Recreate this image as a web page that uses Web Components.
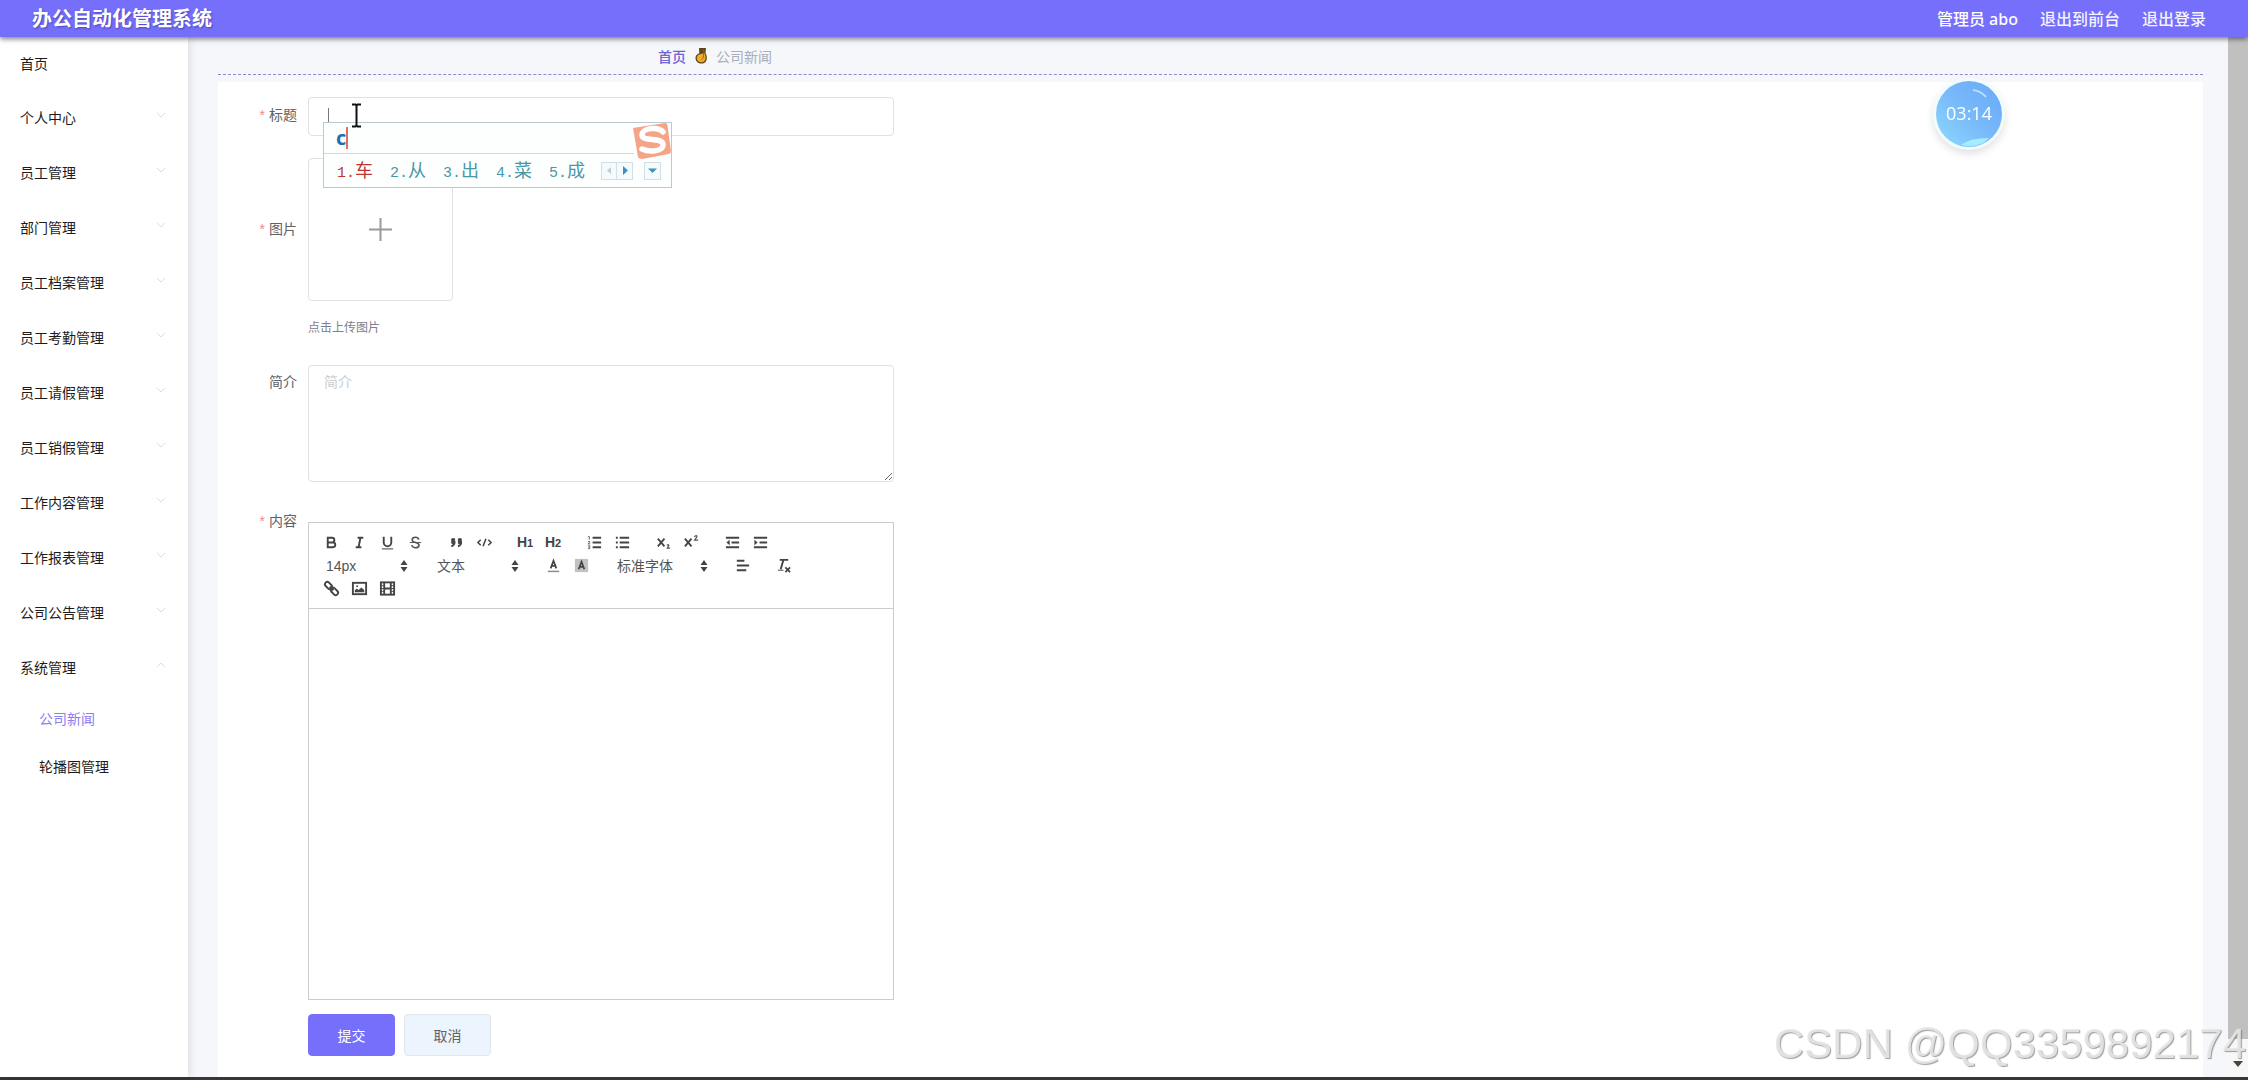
<!DOCTYPE html>
<html lang="zh-CN">
<head>
<meta charset="utf-8">
<title>办公自动化管理系统</title>
<style>
  html, body { margin: 0; height: 100%; }
  body { font-family: "Liberation Sans", "Noto Sans CJK SC", sans-serif; font-size: 14px; color: #606266; background: #fff; overflow: hidden; }
</style>
</head>
<body>
<office-app></office-app>
<script>
const define = (name, html, setup) => {
  const template = document.createElement('template');
  template.innerHTML = '<style>*{box-sizing:border-box}:host{display:block;box-sizing:border-box}</style>' + html;
  customElements.define(name, class extends HTMLElement {
    connectedCallback() {
      if (this.shadowRoot) return;
      const root = this.attachShadow({ mode: 'open' });
      root.append(template.content.cloneNode(true));
      if (setup) setup(root, this);
    }
  });
};

/* Top bar */
define('app-header', `
<style>
  :host { position: relative; z-index: 2; height: 37px; background: #756ffb; color: #fff; box-shadow: 0 2px 5px rgba(0,0,0,.5);
    font-family: "Noto Sans", "Noto Sans CJK SC", sans-serif; }
  header { height: 37px; display: flex; align-items: center; justify-content: space-between; padding: 0 42px 0 32px; }
  h1 { margin: 0; font-size: 20px; line-height: 37px; font-weight: 700; text-shadow: 1px 1px 2px rgba(40,30,120,.5); }
  nav { display: flex; gap: 22px; font-size: 16px; line-height: 36px; font-weight: 500; }
  a { color: #f4f3ff; text-decoration: none; }
</style>
<header><h1>办公自动化管理系统</h1>
<nav><span>管理员 abo</span><a href="#front">退出到前台</a><a href="#logout">退出登录</a></nav></header>`);

/* One line of the side menu */
define('menu-item', `
<style>
  :host { height: 55px; }
  :host([home]) { height: 52px; }
  :host([sub]) { height: 48px; }
  a { display: flex; height: 100%; align-items: center; justify-content: space-between; padding: 0 22px 0 20px; color: #1c1c1c; text-decoration: none; }
  :host([sub]) a { padding-left: 39px; }
  :host([active]) a { color: #8a80f0; }
  svg { display: none; width: 10px; height: 6px; margin-top: -4px; fill: none; stroke: #dcdcdc; }
  :host([arrow]) svg { display: block; }
  :host([arrow=up]) svg { transform: rotate(180deg); }
</style>
<a href="#"><slot></slot><svg viewBox="0 0 10 6"><path d="M1 1l4 4 4-4"/></svg></a>`);

define('side-menu', `
<style>
  :host { flex: none; width: 188px; position: relative; z-index: 1; background: #fff; box-shadow: 2px 0 8px rgba(0,0,0,.1); }
</style>
<nav><menu-item home>首页</menu-item><div id="groups"></div>
<menu-item sub active>公司新闻</menu-item><menu-item sub>轮播图管理</menu-item></nav>`, root => {
  const names = ['个人中心','员工管理','部门管理','员工档案管理','员工考勤管理','员工请假管理','员工销假管理','工作内容管理','工作报表管理','公司公告管理','系统管理'];
  root.getElementById('groups').innerHTML = names.map((n, i) =>
    `<menu-item arrow="${i === names.length - 1 ? 'up' : 'down'}">${n}</menu-item>`).join('');
});

define('bread-crumb', `
<style>
  :host { border-bottom: 1px dashed #8d8ad0; }
  nav { display: flex; align-items: center; gap: 8px; height: 37px; padding: 0 440px; color: #a9aeba; }
  a { color: #6c63d8; font-weight: 500; text-decoration: none; }
  svg { width: 14px; height: 17px; }
</style>
<nav><a href="#home">首页</a>
<svg viewBox="0 0 14 17"><path d="M5 1h7l-.5 5c1 1.500 1.300 3 1.300 5 0 3.500-2 5.500-5.300 5.500S1.500 14.500 1.500 11c0-2.500 1.500-4 3.800-4.800z" fill="#5d471c"/><path d="M6 7.200C4 7.700 2.800 9 2.800 11c0 2.600 1.700 4.200 4.600 4.200 2.700 0 4.100-1.700 4.100-4.500 0-2-.4-3.300-1.200-4.700z" fill="#f0aa2c"/><path d="M8.500 3.500l1.500 0-.5 5c0 2-.7 3.200-2 4" stroke="#8a641c" fill="none"/></svg>
<span>公司新闻</span></nav>`);

/* Label column and field column */
define('form-row', `
<style>
  :host { display: flex; align-items: flex-start; --line: 35px; }
  .label { flex: none; width: 90px; padding-right: 11px; text-align: right; line-height: var(--line); }
  .field { position: relative; flex: 1; max-width: 586px; min-width: 0; }
  .star { display: none; color: #f08a8a; margin-right: 4px; }
  :host([required]) .star { display: inline; }
  :host([kind=input]) { --line: 37px; }
  :host([kind=upload]) { --line: 142px; }
</style>
<div class="label"><span class="star">*</span><slot name="label"></slot></div><div class="field"><slot></slot></div>`);

/* Input-method candidate window */
define('ime-window', `
<style>
  :host { position: absolute; z-index: 3; left: 15px; top: 25px; width: 349px; height: 66px; border: 1px solid #b9c9cf; background: #fdfefe; }
  .typed { display: flex; align-items: center; height: 31px; width: 310px; padding-left: 12px; border-bottom: 1px solid #d3dadd; color: #1c6fb4; font: 700 20px/30px "Open Sans", sans-serif; }
  .typed i { width: 2px; height: 22px; background: #d8735f; }
  .bar { display: flex; align-items: center; height: 33px; padding: 0 10px 0 13px; }
  ol { list-style: none; display: grid; grid-template-columns: repeat(5, 52px); column-gap: 1px; margin: 0; padding: 0; color: #4898a8; font: 18px/30px "Noto Sans CJK SC", sans-serif; }
  li { display: flex; align-items: baseline; white-space: nowrap; }
  li:first-child { color: #bd3632; }
  b { font: 15px/28px "Liberation Mono", monospace; }
  button { width: 17px; height: 18px; padding: 0; border: 1px solid #cfe0ea; background: #f5fafd; display: grid; place-items: center; }
  button + button { margin-left: -1px; }
  button:last-child { margin-left: 11px; width: 18px; }
  button svg { width: 9px; height: 9px; }
  .logo { position: absolute; right: 0; top: 0; width: 39px; height: 37px; }
</style>
<div class="typed">c<i></i></div>
<div class="bar"><ol><li><b>1.</b>车</li><li><b>2.</b>从</li><li><b>3.</b>出</li><li><b>4.</b>菜</li><li><b>5.</b>成</li></ol>
<button type="button" aria-label="上一页"><svg viewBox="0 0 9 9"><path d="M6 1v7L2 4.500z" fill="#b9cfdc"/></svg></button>
<button type="button" aria-label="下一页"><svg viewBox="0 0 9 9"><path d="M3 0v9l5-4.500z" fill="#3f8fc4"/></svg></button>
<button type="button" aria-label="更多"><svg viewBox="0 0 9 9"><path d="M0 2.500h9L4.500 7z" fill="#3f96b4"/></svg></button></div>
<svg class="logo" viewBox="0 0 39 37"><path d="M1 5L33 0q2 0 2.400 2L39 28q0 2-2 3L10 36q-3 0-4-2z" fill="#f6a487"/><path d="M31 9C26 3 10 5 10 12c0 7 20 2 21 9 1 7-13 9-21 5" fill="none" stroke="#fff" stroke-width="5.500" stroke-linecap="round"/></svg>`);

/* Rich-text editor */
const S = 'fill="none" stroke="#444" stroke-width="2"';
const icons = {
  加粗: `<g ${S}><path d="M5 4h4.500a2.500 2.500 0 010 5H5zM5 9h5.500a2.500 2.500 0 010 5H5z"/></g>`,
  斜体: `<g ${S}><path d="M7 4h6M5 14h6M8 14l2-10"/></g>`,
  下划线: `<g ${S}><path d="M5 3v6a4 4 0 008 0V3"/></g><path d="M3 15h12v1.500H3z" fill="#777"/>`,
  删除线: `<path d="M12.500 6C12 4 10.500 3.500 9 3.500 7 3.500 5.500 4.500 5.500 6.300 5.500 10 12.700 8 12.700 11.800c0 1.700-1.500 2.700-3.700 2.700s-3.500-1-4-2.700" fill="none" stroke="#555" stroke-width="1.700"/><path d="M3 9h12" stroke="#555"/>`,
  引用: `<g fill="#444" stroke="#444"><path d="M4 5h3v5H4zM11 5h3v5h-3z"/></g><path d="M7 8c0 3-1 4.500-3.500 5M14 8c0 3-1 4.500-3.500 5" ${S}/>`,
  代码: `<g fill="none" stroke="#444" stroke-width="1.600"><path d="M5 6L2 9l3 3M13 6l3 3-3 3M10.500 5l-3 8"/></g>`,
  有序列表: `<g ${S}><path d="M7 4h9M7 9h9M7 14h9"/></g><g fill="none" stroke="#666"><path d="M2 3l1.500-.500V6M2 8h2v1L2 10.500h2.500M2 12.500h2v3H2M2.500 14H4"/></g>`,
  无序列表: `<g ${S}><path d="M6 4h10M6 9h10M6 14h10M2 4h2M2 9h2M2 14h2"/></g>`,
  下标: `<g ${S}><path d="M3 5l7 8M10 5l-7 8"/></g><path d="M12.500 12q2.500-1.500 2 .5L13 15h3" fill="none" stroke="#555" stroke-width="1.300"/>`,
  上标: `<g ${S}><path d="M2 5l7 8M9 5l-7 8"/></g><path d="M12 3q2.800-2.500 2.800 0L12.300 6.500H16" fill="none" stroke="#555" stroke-width="1.300"/>`,
  减少缩进: `<g ${S}><path d="M2 4h14M8 9h8M2 14h14"/></g><path d="M6 6v6L2.500 9z" fill="#444"/>`,
  增加缩进: `<g ${S}><path d="M2 4h14M8 9h8M2 14h14"/></g><path d="M2.500 6v6L6 9z" fill="#444"/>`,
  文字颜色: `<path d="M6 12l3-8 3 8M7 9.500h4" fill="none" stroke="#444" stroke-width="1.800"/><path d="M3 14.500h12V16H3z" fill="#888"/>`,
  背景颜色: `<path d="M2 2h14v14H2z" fill="#c2c2c2"/><path d="M6 13l3-8 3 8M7 10.500h4" fill="none" stroke="#444" stroke-width="1.800"/>`,
  对齐: `<g ${S}><path d="M3 4h8M3 9h13M3 14h10"/></g>`,
  清除格式: `<g ${S}><path d="M5 3h9M6 13l3-10"/><path d="M11 11l5 5M16 11l-5 5" stroke-width="1.800"/></g><path d="M3 14h6" stroke="#444"/>`,
  链接: `<g ${S}><rect x="1.500" y="3.500" width="8.500" height="5" rx="2.500" transform="rotate(45 6 6)"/><rect x="8" y="9.500" width="8.500" height="5" rx="2.500" transform="rotate(45 12 12)"/><path d="M7 7l4 4"/></g>`,
  图片: `<rect x="2" y="3" width="14" height="12" ${S}/><path d="M4 13V11l2-2 2 1.500L11 8l3 2.500V13z" fill="#444"/><circle cx="6.500" cy="6.500" r="1" fill="#444"/>`,
  视频: `<rect x="2" y="2.500" width="14" height="13" ${S}/><path d="M5.500 3v12M12.500 3v12M5.500 9h7" ${S}/><path d="M2 6h3M2 9h3M2 12h3M13 6h3M13 9h3M13 12h3" stroke="#444"/>`
};
define('tool-button', `
<style>
  :host { width: 28px; height: 23px; }
  button { display: grid; place-items: center; width: 28px; height: 23px; padding: 0; border: 0; background: none; color: #444; font: 700 14px/18px "Liberation Sans", sans-serif; }
  svg { width: 17px; height: 17px; }
  button span { font-size: 11px; }
</style><button type="button"></button>`, (root, host) => {
  const b = root.querySelector('button'), n = host.getAttribute('name');
  b.setAttribute('aria-label', n);
  b.innerHTML = icons[n] ? `<svg viewBox="0 0 18 18">${icons[n]}</svg>` : `<div>H<span>${n.slice(-1)}</span></div>`;
});
define('tool-picker', `
<style>
  :host { display: grid; grid-template-columns: 1fr; width: 98px; height: 23px; }
  :host([wide]) { width: 107px; }
  select, svg { grid-area: 1 / 1; }
  select { appearance: none; width: 100%; height: 23px; padding: 0 0 0 9px; border: 0; background: none; color: #555; font: 14px/22px "Liberation Sans", "Noto Sans CJK SC", sans-serif; }
  svg { place-self: center end; width: 8px; height: 12px; margin-right: 7px; pointer-events: none; fill: #444; }
</style><select><option></option></select><svg viewBox="0 0 8 12"><path d="M4 0l3.500 5h-7zM4 12L.5 7h7z"/></svg>`, (root, host) => {
  root.querySelector('option').textContent = host.getAttribute('value');
  root.querySelector('select').setAttribute('aria-label', host.getAttribute('name'));
});
define('rich-editor', `
<style>
  :host { margin-top: 18px; border: 1px solid #ccc; background: #fff; }
  .tools { padding: 8px; border-bottom: 1px solid #ccc; }
  .line, .group { display: flex; }
  .line { gap: 13px; }
  .page { height: 390px; outline: 0; }
</style>
<div class="tools"></div><div class="page" contenteditable="true" role="textbox" aria-label="内容"></div>`, root => {
  const b = n => `<tool-button name="${n}"></tool-button>`;
  const p = (n, v, w = '') => `<tool-picker name="${n}" value="${v}" ${w}></tool-picker>`;
  const lines = [
    [b('加粗') + b('斜体') + b('下划线') + b('删除线'), b('引用') + b('代码'), b('标题1') + b('标题2'), b('有序列表') + b('无序列表'), b('下标') + b('上标'), b('减少缩进') + b('增加缩进')],
    [p('字号', '14px'), p('标题', '文本'), b('文字颜色') + b('背景颜色'), p('字体', '标准字体', 'wide'), b('对齐'), b('清除格式')],
    [b('链接') + b('图片') + b('视频')]
  ];
  root.querySelector('.tools').innerHTML = lines.map(l => '<div class="line">' + l.map(g => `<div class="group">${g}</div>`).join('') + '</div>').join('');
});

define('news-form', `
<style>
  :host { background: #fff; }
  form { display: flex; flex-direction: column; gap: 22px; padding: 15px 0 20px; }
  input, textarea { display: block; width: 100%; border: 1px solid #dfe1e6; border-radius: 4px; background: #fff; outline: 0; font: 14px/20px "Noto Sans CJK SC", sans-serif; color: #606266; padding: 5px 15px; }
  input { height: 39px; }
  textarea { height: 117px; resize: vertical; }
  textarea::placeholder { color: #c9ccd2; }
  .caret { position: absolute; left: 20px; top: 11px; width: 1px; height: 14px; background: #777; }
  .pointer { position: absolute; z-index: 4; left: 43px; top: 6px; width: 11px; height: 25px; }
  .upload { display: grid; place-items: center; width: 145px; height: 143px; padding: 0; border: 1px solid #dfe1e6; border-radius: 4px; background: #fff; }
  .upload svg { width: 23px; height: 23px; }
  .hint { margin: 0; padding: 15px 0 3px; font-size: 12px; line-height: 24px; color: #7c8088; }
  .actions { display: flex; gap: 9px; margin: -8px 0 0 90px; }
  .actions button { width: 87px; height: 42px; border-radius: 4px; border: 1px solid #dfe6f0; background: #ecf4fd; color: #606266; font: 14px "Noto Sans CJK SC", sans-serif; }
  .actions .primary { border-color: #756ffb; background: #756ffb; color: #fff; }
</style>
<form>
  <form-row required kind="input"><label slot="label" for="title">标题</label><input id="title" type="text"><i class="caret"></i><ime-window></ime-window>
    <svg class="pointer" viewBox="0 0 11 25"><path d="M1 1.500h3.500l1 1 1-1H10M5.500 2v21M1 23.500h3.500l1-1 1 1H10" fill="none" stroke="#111" stroke-width="2"/></svg></form-row>
  <form-row required kind="upload"><label slot="label" for="picture">图片</label>
    <button id="picture" class="upload" type="button"><svg viewBox="0 0 23 23"><path d="M11.500 0v23M0 11.500h23" stroke="#9a9a9a" stroke-width="2"/></svg></button><p class="hint">点击上传图片</p></form-row>
  <form-row><label slot="label" for="intro">简介</label><textarea id="intro" placeholder="简介"></textarea></form-row>
  <form-row required><span slot="label">内容</span><rich-editor></rich-editor></form-row>
  <div class="actions"><button class="primary" type="submit">提交</button><button type="button">取消</button></div>
</form>`);

define('record-clock', `
<style>
  :host { position: fixed; z-index: 5; right: 246px; top: 81px; width: 66px; height: 66px; border-radius: 50%; background: linear-gradient(225deg, #67a9f8, #78b9fa 50%, #8edafd); box-shadow: 0 0 0 3px #f1fcff, 0 4px 10px 2px rgba(0,0,0,.14); display: grid; color: #fff; font: 18px/64px "Open Sans", sans-serif; text-align: center; }
  svg, time { grid-area: 1 / 1; }
</style>
<svg viewBox="0 0 66 66"><path d="M37 9q8 1 13 7" fill="none" stroke="#c5e4ff" stroke-width="1.500"/><path d="M25 64q8-7 28-7-10 11-28 7z" fill="#a5ecff"/></svg><time>03:14</time>`);

define('page-scrollbar', `
<style>
  :host { flex: none; width: 20px; display: flex; flex-direction: column; background: #f7f7f7; }
  .thumb { flex: 1; background: #c0c0c0; }
  svg { width: 20px; height: 38px; }
</style><div class="thumb"></div><svg viewBox="0 0 20 38"><path d="M5 22h10l-5 6z" fill="#444"/></svg>`);

define('water-mark', `
<style>
  :host { position: fixed; z-index: 6; right: 2px; bottom: 4px; pointer-events: none; color: rgba(232,232,232,.9); font: 42px/64px "Liberation Sans", sans-serif; text-shadow: 1px 1px 1px rgba(90,90,90,.6); white-space: nowrap; }
</style>CSDN @QQ3359892174`);

define('office-app', `
<style>
  :host { display: flex; flex-direction: column; height: 100vh; border-bottom: 3px solid #38363a; }
  .body { flex: 1; min-height: 0; display: flex; }
  main { flex: 1; min-width: 0; display: flex; flex-direction: column; padding: 0 25px 0 30px; background: #f5f7fa; overflow: hidden; }
  news-form { flex: 1; margin-top: 7px; }
</style>
<app-header></app-header>
<div class="body"><side-menu></side-menu><main><bread-crumb></bread-crumb><news-form></news-form></main><page-scrollbar></page-scrollbar></div>
<record-clock></record-clock><water-mark></water-mark>`);
</script>
</body>
</html>
